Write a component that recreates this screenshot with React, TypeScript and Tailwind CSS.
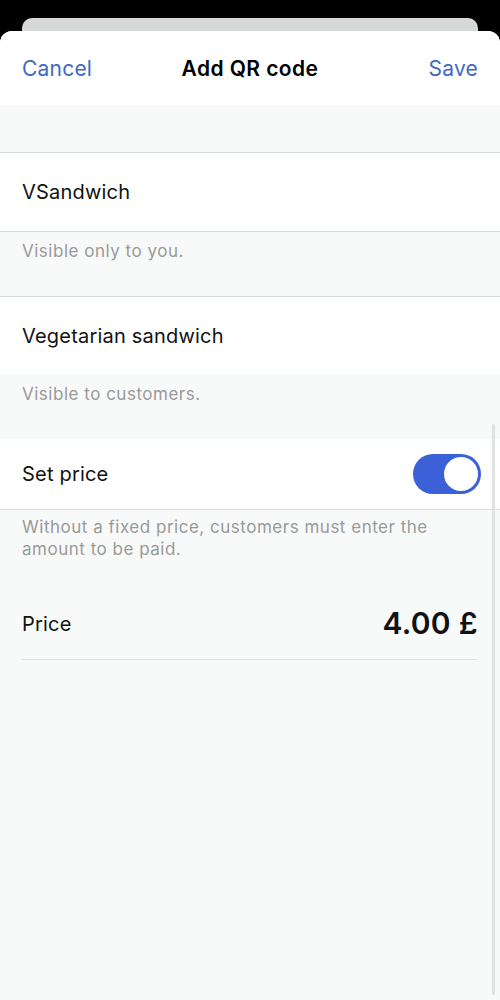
import React from "react";

export default function App() {
  return (
    <div
      className="relative w-[500px] h-[1000px] bg-black overflow-hidden flex flex-col"
      style={{ fontFamily: "Inter, 'Noto Sans', sans-serif" }}
    >
      <div className="h-[18px] shrink-0" />
      <div className="mx-[22px] h-[13px] shrink-0 rounded-t-[10px] bg-[#d7d8d8]" />
      <div className="flex-1 flex flex-col rounded-t-[12px] bg-[#f8f9f9] overflow-hidden">
        <div className="h-[74px] shrink-0 bg-white grid grid-cols-[1fr_auto_1fr] items-center px-[22px] pt-[2px]">
          <span className="text-[21px] tracking-[0.01em] text-[#4168c5] justify-self-start">Cancel</span>
          <span className="text-[21px] tracking-[0.02em] font-semibold text-black">Add QR code</span>
          <span className="text-[21px] tracking-[0.01em] text-[#4168c5] justify-self-end">Save</span>
        </div>
        <div className="h-[47px] shrink-0" />
        <div className="h-[80px] shrink-0 bg-white border-y border-[#dcdcdc] flex items-center px-[22px]">
          <span className="text-[20px] tracking-[0.01em] text-[#111]">VSandwich</span>
        </div>
        <div className="h-[64px] shrink-0 px-[22px] pt-[7px]">
          <span className="text-[17px] tracking-[0.03em] text-[#9a9a9a]">Visible only to you.</span>
        </div>
        <div className="h-[79px] shrink-0 bg-white border-t border-[#dcdcdc] flex items-center px-[22px]">
          <span className="text-[20px] tracking-[0.01em] text-[#111]">Vegetarian sandwich</span>
        </div>
        <div className="h-[64px] shrink-0 px-[22px] pt-[7px]">
          <span className="text-[17px] tracking-[0.03em] text-[#9a9a9a]">Visible to customers.</span>
        </div>
        <div className="h-[71px] shrink-0 bg-white border-b border-[#dcdcdc] flex items-center justify-between pl-[22px] pr-[19px]">
          <span className="text-[20px] tracking-[0.01em] text-[#111]">Set price</span>
          <div className="w-[68px] h-[40px] rounded-full bg-[#3c60d8] flex items-center justify-end pr-[1px]">
            <div className="w-[38px] h-[38px] rounded-full bg-white border-2 border-[#3c60d8]" />
          </div>
        </div>
        <div className="px-[22px] pt-[6px] pb-[28px] pr-[40px]">
          <p className="text-[17px] tracking-[0.03em] leading-[22px] text-[#9a9a9a]">
            Without a fixed price, customers must enter the amount to be paid.
          </p>
        </div>
        <div className="mx-[22px] h-[72px] border-b border-[#e2e3e3] flex items-center justify-between">
          <span className="text-[20px] tracking-[0.01em] text-[#111]">Price</span>
          <span className="text-[30px] font-semibold tracking-[0.01em] text-[#111]">4.00 £</span>
        </div>
      </div>
      <div className="absolute right-[5px] top-[424px] w-[3px] h-[571px] rounded-full bg-[#e1e2e2]" />
    </div>
  );
}
